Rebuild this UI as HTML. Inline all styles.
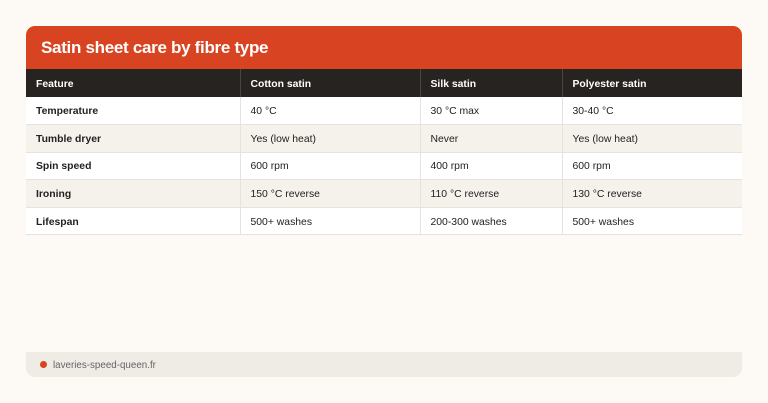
<!DOCTYPE html>
<html><head><style>
*{margin:0;padding:0;box-sizing:border-box}
body{width:768px;height:403px;background:#fdf9f5;font-family:"Liberation Sans",sans-serif;position:relative;overflow:hidden}
.hd{position:absolute;left:26px;top:26px;width:716px;height:43px;background:#d84421;border-radius:9px 9px 0 0;color:#fff;font-weight:bold;font-size:17px;padding:12px 0 0 15px;letter-spacing:-0.3px}
table{position:absolute;left:26px;top:69px;width:716px;border-collapse:collapse;font-size:10.4px;color:#222}
td,th{height:27.6px;padding:2px 10px 0;text-align:left;border-right:1px solid #e6e2dc;border-bottom:1px solid #e6e2dc}
td:last-child,th:last-child{border-right:none}
th{background:#272321;color:#fff;font-weight:bold;height:28px;border-bottom:none;border-right:1px solid #4a4542}
td:first-child{font-weight:bold}
tr.a td{background:#fff}
tr.b td{background:#f5f2ec}
.ft{position:absolute;left:26px;top:352px;width:716px;height:25px;background:#efebe5;border-radius:0 0 9px 9px;font-size:9.8px;color:#666;padding:8px 0 0 27px}
.ft:before{content:"";position:absolute;left:14px;top:9px;width:7px;height:7px;border-radius:50%;background:#d84421}
</style></head><body>
<div class="hd">Satin sheet care by fibre type</div>
<table>
<tr><th style="width:214px">Feature</th><th style="width:180px">Cotton satin</th><th style="width:142px">Silk satin</th><th>Polyester satin</th></tr>
<tr class="a"><td>Temperature</td><td>40 °C</td><td>30 °C max</td><td>30-40 °C</td></tr>
<tr class="b"><td>Tumble dryer</td><td>Yes (low heat)</td><td>Never</td><td>Yes (low heat)</td></tr>
<tr class="a"><td>Spin speed</td><td>600 rpm</td><td>400 rpm</td><td>600 rpm</td></tr>
<tr class="b"><td>Ironing</td><td>150 °C reverse</td><td>110 °C reverse</td><td>130 °C reverse</td></tr>
<tr class="a"><td>Lifespan</td><td>500+ washes</td><td>200-300 washes</td><td>500+ washes</td></tr>
</table>
<div class="ft">laveries-speed-queen.fr</div>
</body></html>
